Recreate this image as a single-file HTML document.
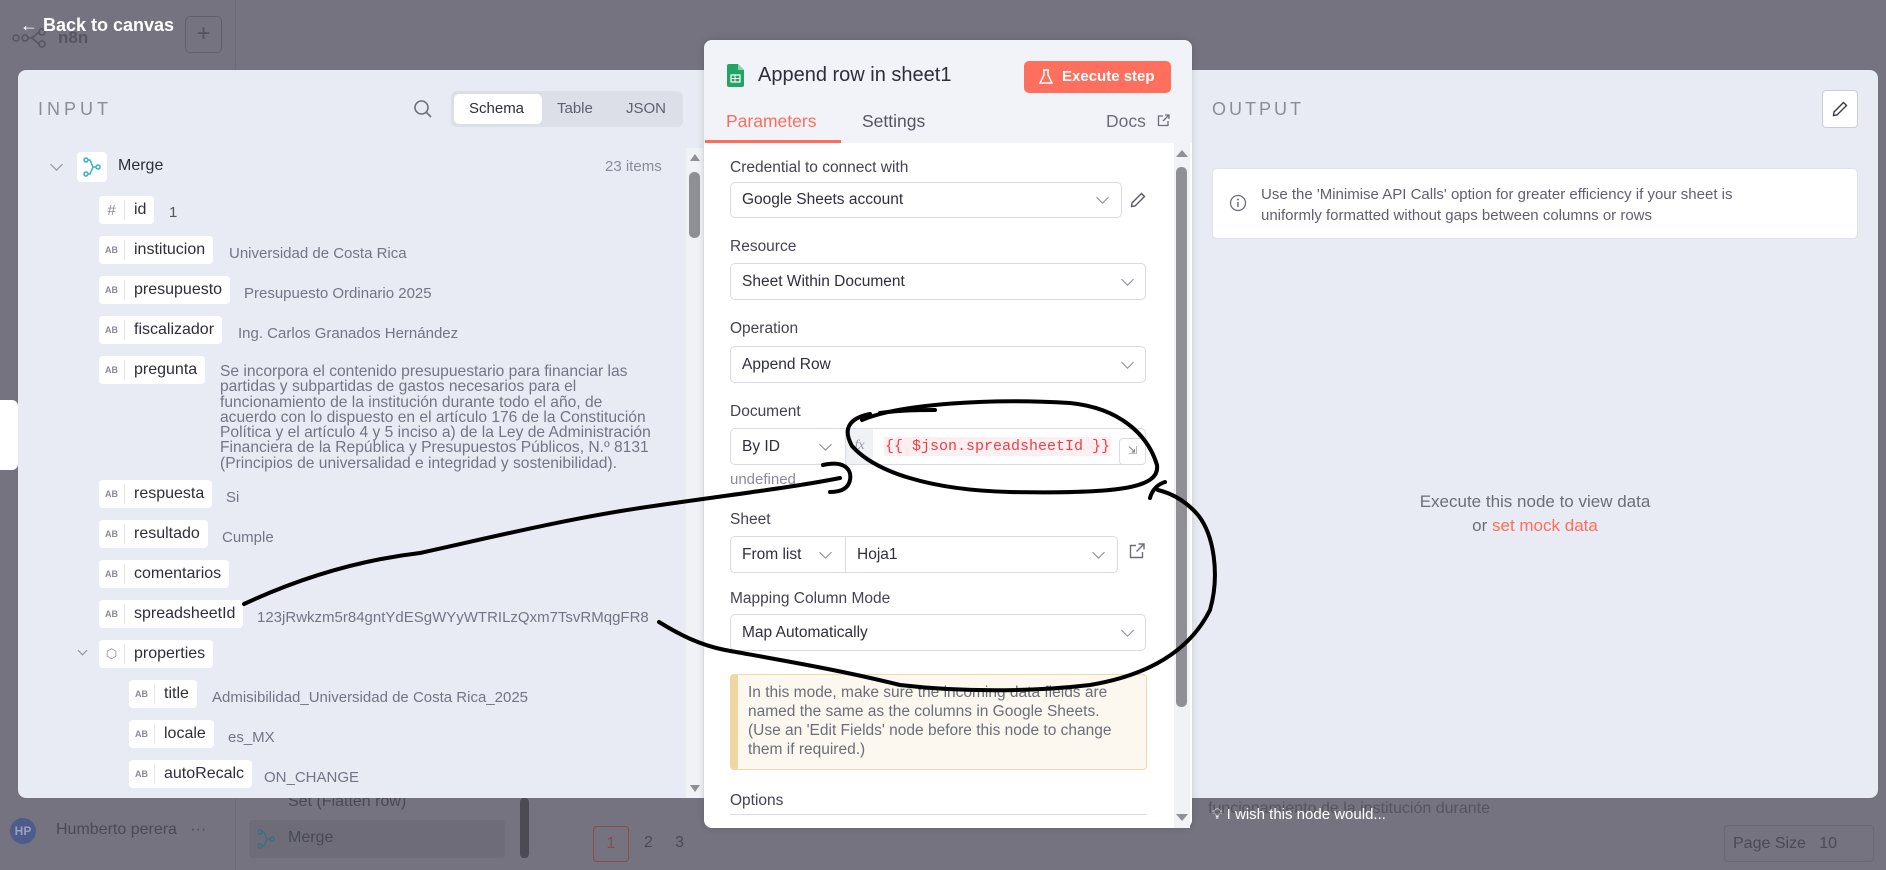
<!DOCTYPE html>
<html><head><meta charset="utf-8"><style>
*{box-sizing:border-box;margin:0;padding:0}
body{width:1886px;height:870px;overflow:hidden;background:#74737f;font-family:"Liberation Sans",sans-serif;position:relative}
.a{position:absolute}
.panel{position:absolute;background:#e8ebf3;border-radius:8px}
.pill{position:absolute;height:28px;background:#fff;border-radius:4px;display:flex;align-items:center;font-size:16px;color:#2e2e3a}
.pill .ic{width:26px;height:20px;border-right:1px solid #e4e6ee;display:flex;align-items:center;justify-content:center;font-size:9px;color:#8a8a98;font-weight:bold}
.pill .nm{padding:0 8px 0 9px}
.val{position:absolute;font-size:15px;color:#747486;white-space:nowrap}
.lbl{position:absolute;left:730px;font-size:15.5px;color:#444451}
.inp{position:absolute;background:#fff;border:1px solid #d8dbe4;border-radius:5px;font-size:15.5px;color:#2f2f3b;display:flex;align-items:center;padding-left:11px}
.chev{position:absolute;width:9px;height:9px;border-right:1.5px solid #8a8b98;border-bottom:1.5px solid #8a8b98;transform:rotate(45deg)}
</style></head><body>
<div class="a" style="left:235px;top:0;width:1px;height:870px;background:#6c6b77"></div>
<svg class="a" style="left:12px;top:28px" width="36" height="20" viewBox="0 0 36 20"><g fill="none" stroke="#55545f" stroke-width="1.5"><circle cx="4" cy="10" r="3"/><circle cx="13" cy="10" r="3"/><circle cx="30" cy="4" r="3"/><circle cx="30" cy="16" r="3"/><path d="M16 10H20L27 4M20 10L27 16"/></g></svg>
<div class="a" style="left:58px;top:28px;color:#55545f;font-size:17px;font-weight:bold">n8n</div>
<div class="a" style="left:20px;top:15px;color:#fff;font-size:18px;font-weight:bold">&#8592; Back to canvas</div>
<div class="a" style="left:185px;top:16px;width:37px;height:37px;border:1px solid #5f5e6a;border-radius:5px;color:#55545f;font-size:24px;text-align:center;line-height:34px">+</div>
<div class="a" style="left:10px;top:818px;width:26px;height:26px;border-radius:50%;background:#4d5c8a;color:#9aa0c0;font-size:12px;font-weight:bold;text-align:center;line-height:26px">HP</div>
<div class="a" style="left:56px;top:821px;color:#4a4956;font-size:16px">Humberto perera &nbsp; &middot;&middot;&middot;</div>
<div class="a" style="left:288px;top:793px;color:#4a4956;font-size:16px">Set (Flatten row)</div>
<div class="a" style="left:249px;top:820px;width:256px;height:38px;background:#6d6c78;border-radius:4px"></div>
<svg class="a" style="left:257px;top:829px" width="18" height="20" viewBox="0 0 18 20"><g fill="none" stroke="#3f6f80" stroke-width="1.5"><circle cx="3" cy="3" r="2"/><circle cx="3" cy="17" r="2"/><circle cx="15" cy="10" r="2"/><path d="M5 3 H7 L10 10 H13 M5 17 H7 L10 10"/></g></svg>
<div class="a" style="left:288px;top:829px;color:#4a4956;font-size:16px">Merge</div>
<div class="a" style="left:520px;top:798px;width:9px;height:60px;background:#4c4b55;border-radius:4px"></div>
<div class="a" style="left:593px;top:826px;width:36px;height:36px;border:1px solid #8a4a48;border-radius:4px;color:#8a4a48;text-align:center;line-height:34px;font-size:16px">1</div>
<div class="a" style="left:644px;top:834px;color:#4a4956;font-size:16px">2 &nbsp;&nbsp;&nbsp; 3</div>
<div class="a" style="left:1724px;top:825px;width:150px;height:37px;border:1px solid #6a6975;border-radius:4px;color:#4a4956;font-size:16px;padding:9px 8px">Page Size &nbsp; 10</div>
<div class="a" style="left:1208px;top:800px;color:#55545f;font-size:16px">funcionamiento de la institución durante</div>
<div class="a" style="left:0;top:400px;width:18px;height:70px;background:#fff;border-radius:0 6px 6px 0"></div>

<div class="panel" style="left:18px;top:70px;width:686px;height:728px;border-radius:8px 0 0 8px"></div>
<div class="a" style="left:38px;top:99px;font-size:18px;letter-spacing:4px;color:#8c8c98">INPUT</div>
<svg class="a" style="left:413px;top:99px" width="20" height="20" viewBox="0 0 20 20"><circle cx="8.5" cy="8.5" r="6.5" fill="none" stroke="#6d6d7a" stroke-width="1.6"/><path d="M13.5 13.5 L18 18" stroke="#6d6d7a" stroke-width="1.6"/></svg>
<div class="a" style="left:451px;top:91px;width:232px;height:36px;background:#dcdfe8;border-radius:6px"></div>
<div class="a" style="left:454px;top:94px;width:88px;height:30px;background:#fff;border-radius:5px"></div>
<div class="a" style="left:469px;top:100px;font-size:15px;color:#2e2e3a">Schema</div>
<div class="a" style="left:557px;top:100px;font-size:15px;color:#5f5f6e">Table</div>
<div class="a" style="left:626px;top:100px;font-size:15px;color:#5f5f6e">JSON</div>
<div class="a" style="left:686px;top:148px;width:17px;height:650px;background:#f1f2f6"></div>
<div class="a" style="left:689px;top:172px;width:11px;height:66px;background:#8f8f95;border-radius:5px"></div>
<div class="a" style="left:690px;top:154px;width:0;height:0;border:5px solid transparent;border-bottom:7px solid #8f8f95;border-top:0"></div>
<div class="a" style="left:690px;top:785px;width:0;height:0;border:5px solid transparent;border-top:7px solid #8f8f95;border-bottom:0"></div>

<div class="chev" style="left:52px;top:160px"></div>
<div class="a" style="left:77px;top:152px;width:30px;height:30px;background:#fff;border-radius:4px"></div>
<svg class="a" style="left:83px;top:157px" width="18" height="20" viewBox="0 0 18 20"><g fill="none" stroke="#35b3c4" stroke-width="1.5"><circle cx="3" cy="3" r="2"/><circle cx="3" cy="17" r="2"/><circle cx="15" cy="10" r="2"/><path d="M5 3 H7 L10 10 H13 M5 17 H7 L10 10"/></g></svg>
<div class="a" style="left:118px;top:157px;font-size:16px;color:#2e2e3a">Merge</div>
<div class="a" style="left:605px;top:158px;font-size:15px;color:#8a8a98">23 items</div>

<div class="pill" style="left:99px;top:196px"><div class="ic" style="font-size:15px;font-weight:normal">#</div><div class="nm">id</div></div><div class="val" style="left:169px;top:204px;color:#555">1</div>
<div class="pill" style="left:99px;top:236px"><div class="ic">AB</div><div class="nm">institucion</div></div><div class="val" style="left:229px;top:245px">Universidad de Costa Rica</div>
<div class="pill" style="left:99px;top:276px"><div class="ic">AB</div><div class="nm">presupuesto</div></div><div class="val" style="left:244px;top:285px">Presupuesto Ordinario 2025</div>
<div class="pill" style="left:99px;top:316px"><div class="ic">AB</div><div class="nm">fiscalizador</div></div><div class="val" style="left:238px;top:325px">Ing. Carlos Granados Hernández</div>
<div class="pill" style="left:99px;top:356px"><div class="ic">AB</div><div class="nm">pregunta</div></div>
<div class="val" style="left:220px;top:364px;line-height:15.3px;font-size:15.6px">Se incorpora el contenido presupuestario para financiar las<br>partidas y subpartidas de gastos necesarios para el<br>funcionamiento de la institución durante todo el año, de<br>acuerdo con lo dispuesto en el artículo 176 de la Constitución<br>Política y el artículo 4 y 5 inciso a) de la Ley de Administración<br>Financiera de la República y Presupuestos Públicos, N.º 8131<br>(Principios de universalidad e integridad y sostenibilidad).</div>
<div class="pill" style="left:99px;top:480px"><div class="ic">AB</div><div class="nm">respuesta</div></div><div class="val" style="left:226px;top:489px">Si</div>
<div class="pill" style="left:99px;top:520px"><div class="ic">AB</div><div class="nm">resultado</div></div><div class="val" style="left:222px;top:529px">Cumple</div>
<div class="pill" style="left:99px;top:560px"><div class="ic">AB</div><div class="nm">comentarios</div></div>
<div class="pill" style="left:99px;top:600px"><div class="ic">AB</div><div class="nm">spreadsheetId</div></div><div class="val" style="left:257px;top:609px">123jRwkzm5r84gntYdESgWYyWTRILzQxm7TsvRMqgFR8</div>
<div class="chev" style="left:79px;top:647px;width:7px;height:7px"></div>
<div class="pill" style="left:99px;top:640px"><div class="ic" style="font-size:13px;font-weight:normal">&#11041;</div><div class="nm">properties</div></div>
<div class="pill" style="left:129px;top:680px"><div class="ic">AB</div><div class="nm">title</div></div><div class="val" style="left:212px;top:689px">Admisibilidad_Universidad de Costa Rica_2025</div>
<div class="pill" style="left:129px;top:720px"><div class="ic">AB</div><div class="nm">locale</div></div><div class="val" style="left:228px;top:729px">es_MX</div>
<div class="pill" style="left:129px;top:760px"><div class="ic">AB</div><div class="nm">autoRecalc</div></div><div class="val" style="left:264px;top:769px">ON_CHANGE</div>

<div class="panel" style="left:1191px;top:70px;width:687px;height:728px;border-radius:0 8px 8px 0"></div>
<div class="a" style="left:1212px;top:99px;font-size:18px;letter-spacing:3px;color:#8c8c98">OUTPUT</div>
<div class="a" style="left:1822px;top:90px;width:36px;height:38px;background:#fff;border:1px solid #c9ccd6;border-radius:4px"></div>
<svg class="a" style="left:1831px;top:100px" width="18" height="18" viewBox="0 0 18 18"><path d="M12.5 2.5 L15.5 5.5 L6 15 L2.5 15.5 L3 12 Z" fill="none" stroke="#3a3a46" stroke-width="1.4"/></svg>
<div class="a" style="left:1212px;top:168px;width:646px;height:71px;background:#fff;border:1px solid #dfe2ea;border-radius:5px"></div>
<svg class="a" style="left:1229px;top:194px" width="18" height="18" viewBox="0 0 18 18"><circle cx="9" cy="9" r="7.5" fill="none" stroke="#6d6d7a" stroke-width="1.3"/><path d="M9 8v5" stroke="#6d6d7a" stroke-width="1.5"/><circle cx="9" cy="5.5" r="1" fill="#6d6d7a"/></svg>
<div class="a" style="left:1261px;top:184px;font-size:15px;line-height:21px;color:#5f5f6e">Use the 'Minimise API Calls' option for greater efficiency if your sheet is<br>uniformly formatted without gaps between columns or rows</div>
<div class="a" style="left:1335px;top:490px;width:400px;text-align:center;font-size:17px;line-height:24px;color:#6d6d7a">Execute this node to view data<br>or <span style="color:#ff6d5a">set mock data</span></div>
<div class="a" style="left:1212px;top:806px;color:#fff;font-size:15px">&#128161;&#xFE0E; I wish this node would...</div>

<div class="a" style="left:704px;top:40px;width:488px;height:788px;background:#fff;border-radius:8px;overflow:hidden;box-shadow:0 0 8px rgba(0,0,0,.15)">
<div style="position:absolute;left:0;top:0;width:488px;height:103px;background:#f2f3f8"></div>
</div>
<svg class="a" style="left:727px;top:64px" width="17" height="23" viewBox="0 0 17 23"><path d="M0 2 Q0 0 2 0 H11 L17 6 V21 Q17 23 15 23 H2 Q0 23 0 21Z" fill="#21a464"/><path d="M11 0 V6 H17Z" fill="#8ed1a8"/><rect x="4" y="11" width="9" height="7" fill="none" stroke="#fff" stroke-width="1.2"/><path d="M4 14.5 H13 M8 11 V18" stroke="#fff" stroke-width="1"/></svg>
<div class="a" style="left:758px;top:64px;font-size:20px;color:#2e2e3a">Append row in sheet1</div>
<div class="a" style="left:1024px;top:61px;width:147px;height:32px;background:#ff6f5e;border-radius:5px;color:#fff;font-size:15px;font-weight:bold;line-height:32px;padding-left:38px">Execute step</div>
<svg class="a" style="left:1039px;top:69px" width="14" height="16" viewBox="0 0 14 16"><path d="M4 1 H10 M5 1 V6 L1 14 H13 L9 6 V1" fill="none" stroke="#fff" stroke-width="1.5"/></svg>
<div class="a" style="left:726px;top:111px;font-size:17.5px;color:#ff6d5a">Parameters</div>
<div class="a" style="left:862px;top:111px;font-size:17.5px;color:#555562">Settings</div>
<div class="a" style="left:1106px;top:111px;font-size:17.5px;color:#6d6d7a">Docs</div>
<svg class="a" style="left:1157px;top:114px" width="13" height="13" viewBox="0 0 13 13"><path d="M6 2H1.5V11.5H11V7 M8 1H12V5 M12 1L6 7" fill="none" stroke="#6d6d7a" stroke-width="1.3"/></svg>
<div class="a" style="left:705px;top:140px;width:136px;height:3px;background:#ff6d5a"></div>
<div class="a" style="left:1174px;top:143px;width:16px;height:685px;background:#f1f2f6"></div>
<div class="a" style="left:1176px;top:167px;width:11px;height:540px;background:#8f8f95;border-radius:5px"></div>
<div class="a" style="left:1176px;top:150px;width:0;height:0;border:6px solid transparent;border-bottom:7px solid #8f8f95;border-top:0"></div>
<div class="a" style="left:1176px;top:814px;width:0;height:0;border:6px solid transparent;border-top:7px solid #8f8f95;border-bottom:0"></div>

<div class="lbl" style="top:159px">Credential to connect with</div>
<div class="inp" style="left:730px;top:182px;width:392px;height:36px">Google Sheets account</div><div class="chev" style="left:1098px;top:193px"></div>
<svg class="a" style="left:1129px;top:191px" width="18" height="18" viewBox="0 0 18 18"><path d="M12.5 2.5 L15.5 5.5 L6 15 L2.5 15.5 L3 12 Z" fill="none" stroke="#5a5a66" stroke-width="1.4"/></svg>
<div class="lbl" style="top:238px">Resource</div>
<div class="inp" style="left:730px;top:263px;width:416px;height:37px">Sheet Within Document</div><div class="chev" style="left:1123px;top:275px"></div>
<div class="lbl" style="top:320px">Operation</div>
<div class="inp" style="left:730px;top:346px;width:416px;height:37px">Append Row</div><div class="chev" style="left:1123px;top:358px"></div>
<div class="lbl" style="top:403px">Document</div>
<div class="inp" style="left:730px;top:428px;width:116px;height:37px;border-radius:5px 0 0 5px">By ID</div><div class="chev" style="left:821px;top:440px"></div>
<div class="a" style="left:845px;top:428px;width:301px;height:37px;border:1px solid #d8dbe4;border-radius:0 5px 5px 0;background:#fff"></div>
<div class="a" style="left:846px;top:429px;width:27px;height:35px;background:#f0f1f5;color:#9a9aa6;font-style:italic;font-family:'Liberation Serif',serif;font-size:14px;text-align:center;line-height:33px">fx</div>
<div class="a" style="left:884px;top:437px;background:#fdeff0;color:#e8414b;font-family:'Liberation Mono',monospace;font-size:15px;padding:1px 1px">{{ $json.spreadsheetId }}</div>
<div class="a" style="left:1119px;top:438px;width:27px;height:27px;border:1px solid #d8dbe4;border-radius:4px;background:#fff;color:#777;font-size:11px;text-align:center;line-height:25px">&#8690;</div>
<div class="a" style="left:730px;top:471px;font-size:15px;color:#8a8a98">undefined</div>
<div class="lbl" style="top:511px">Sheet</div>
<div class="inp" style="left:730px;top:536px;width:116px;height:37px;border-radius:5px 0 0 5px">From list</div><div class="chev" style="left:821px;top:548px"></div>
<div class="inp" style="left:845px;top:536px;width:273px;height:37px;border-radius:0 5px 5px 0">Hoja1</div><div class="chev" style="left:1094px;top:548px"></div>
<svg class="a" style="left:1129px;top:543px" width="16" height="16" viewBox="0 0 16 16"><path d="M7 2.5H1.5V14.5H13.5V9 M9.5 1H15V6.5 M15 1L7.5 8.5" fill="none" stroke="#6d6d7a" stroke-width="1.4"/></svg>
<div class="lbl" style="top:590px">Mapping Column Mode</div>
<div class="inp" style="left:730px;top:614px;width:416px;height:37px">Map Automatically</div><div class="chev" style="left:1123px;top:626px"></div>
<div class="a" style="left:730px;top:674px;width:417px;height:96px;background:#fcf8ef;border:1px solid #f0d9a8;border-left:8px solid #f2d6a2;border-radius:4px"></div>
<div class="a" style="left:748px;top:683px;font-size:15.5px;line-height:19px;color:#6d6d7a">In this mode, make sure the incoming data fields are<br>named the same as the columns in Google Sheets.<br>(Use an 'Edit Fields' node before this node to change<br>them if required.)</div>
<div class="lbl" style="top:792px">Options</div>
<div class="a" style="left:730px;top:814px;width:417px;height:1px;background:#d8dbe4"></div>

<svg class="a" style="left:0;top:0" width="1886" height="870" viewBox="0 0 1886 870">
<g fill="none" stroke="#000" stroke-width="4" stroke-linecap="round" stroke-linejoin="round">
<path d="M880 413 C900 410 920 410 935 410"/>
<path d="M862 420 C900 404 990 398 1070 403 C1120 408 1148 435 1157 465 C1160 488 1120 494 1010 492 C930 490 875 472 852 446 C842 428 850 418 870 414"/>
<path d="M244 604 C300 578 360 560 420 553 C480 540 560 520 640 508 C720 496 790 488 840 478"/>
<path d="M823 465 C845 460 852 470 850 480 C848 490 838 492 830 492"/>
<path d="M659 622 C680 635 700 645 725 650 C780 660 840 670 900 685 C960 692 1030 692 1090 685 C1150 675 1190 650 1210 610 C1220 575 1214 535 1198 515 C1185 500 1170 493 1158 490"/>
<path d="M1150 498 C1152 490 1158 484 1165 482"/>
</g></svg>
</body></html>
